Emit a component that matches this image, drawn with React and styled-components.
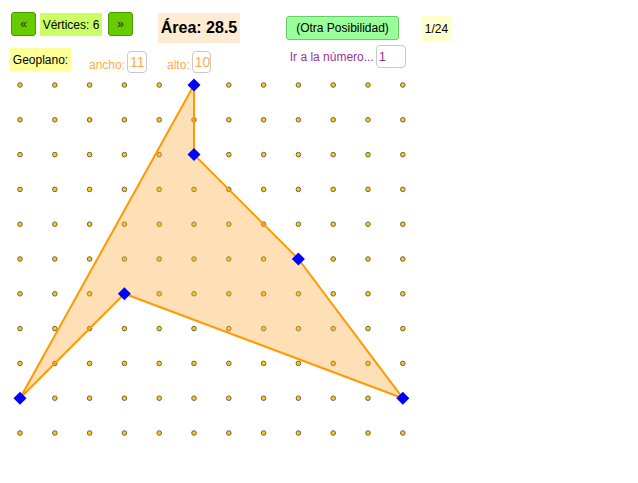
import React from 'react'
import styled, { createGlobalStyle } from 'styled-components'

const GlobalStyle = createGlobalStyle`
  body { margin: 0; background: #fff; }
  * { box-sizing: border-box; }
`

const COLS = 12
const ROWS = 11
const STEP = 34.8
const X0 = 20
const Y0 = 85

const vertices = [[5, 0], [5, 2], [8, 5], [11, 9], [3, 6], [0, 9]]
const px = ([c, r]) => [X0 + c * STEP, Y0 + r * STEP]

const Page = styled.div`
  position: relative;
  width: 638px;
  height: 483px;
  font-family: "Liberation Sans", Arial, sans-serif;
  font-size: 12px;
  color: #000;
  overflow: hidden;
`

const Board = styled.svg`
  position: absolute;
  left: 0;
  top: 0;
`

const Controls = styled.div`
  position: relative;
  padding-top: 12px;
`

const Row = styled.div`
  display: flex;
  align-items: flex-start;
  height: ${p => p.$height}px;
`

const NavButton = styled.div`
  width: 25px;
  height: 24px;
  margin-left: ${p => p.$left}px;
  background: #66cc00;
  border: 1px solid #4d9a00;
  border-radius: 3px;
  display: flex;
  align-items: center;
  justify-content: center;
  font-size: 12px;
  color: #1a3300;
`

const Tag = styled.div`
  height: 23px;
  width: ${p => p.$width}px;
  margin-left: ${p => p.$left}px;
  margin-top: ${p => p.$top || 0}px;
  background: ${p => p.$bg};
  display: flex;
  align-items: center;
  justify-content: center;
`

const AreaBox = styled.div`
  width: 82px;
  height: 30px;
  margin-left: 25px;
  margin-top: 1px;
  background: #fdebd4;
  font-weight: bold;
  font-size: 16px;
  display: flex;
  align-items: center;
  justify-content: center;
`

const OtraButton = styled.div`
  width: 113px;
  height: 24px;
  margin-left: 46px;
  margin-top: 4px;
  background: #99ff99;
  border: 1px solid #66cc66;
  border-radius: 3px;
  display: flex;
  align-items: center;
  justify-content: center;
`

const Counter = styled.div`
  width: 29px;
  height: 25px;
  margin-left: 23px;
  margin-top: 4px;
  background: #ffffcc;
  display: flex;
  align-items: center;
  justify-content: center;
`

const Field = styled.div`
  display: flex;
  align-items: ${p => p.$align};
  margin-left: ${p => p.$left}px;
  margin-top: ${p => p.$top}px;
  color: ${p => p.$color};
`

const FieldLabel = styled.span`
  line-height: 14px;
  margin-bottom: ${p => p.$bottom || 0}px;
  margin-right: 2px;
`

const FieldInput = styled.div`
  width: ${p => p.$width}px;
  height: ${p => p.$height}px;
  border: 1px solid #c8c8c8;
  border-radius: 4px;
  padding-left: 2px;
  display: flex;
  align-items: center;
  background: #fff;
  font-size: ${p => p.$size}px;
`

function Geoboard() {
  const dots = []
  for (let r = 0; r < ROWS; r++) {
    for (let c = 0; c < COLS; c++) {
      const [x, y] = px([c, r])
      dots.push(<circle key={`${c}-${r}`} cx={x} cy={y} r="2.3" fill="#ffcc00" stroke="#555" strokeWidth="0.9" />)
    }
  }
  const pts = vertices.map(px)
  return (
    <Board width="638" height="483" viewBox="0 0 638 483">
      {dots}
      <polygon
        points={pts.map(p => p.join(',')).join(' ')}
        fill="rgba(255,170,60,0.38)"
        stroke="#ff9900"
        strokeWidth="2"
        strokeLinejoin="round"
      />
      {pts.map(([x, y], i) => (
        <polygon key={i} points={`${x},${y - 6.5} ${x + 6.5},${y} ${x},${y + 6.5} ${x - 6.5},${y}`} fill="#0000ff" />
      ))}
    </Board>
  )
}

export default function App() {
  return (
    <Page>
      <GlobalStyle />
      <Geoboard />
      <Controls>
        <Row $height={33}>
          <NavButton $left={11}>«</NavButton>
          <Tag $width={62} $left={4} $top={1} $bg="#ccff66">Vértices: 6</Tag>
          <NavButton $left={6}>»</NavButton>
          <AreaBox>Área: 28.5</AreaBox>
          <OtraButton>(Otra Posibilidad)</OtraButton>
          <Counter>1/24</Counter>
        </Row>
        <Row $height={30}>
          <Tag $width={61} $left={10} $top={3} $bg="#ffff99">Geoplano:</Tag>
          <Field $align="flex-end" $left={18} $top={6} $color="#ffaa4d">
            <FieldLabel $bottom={1}>ancho:</FieldLabel>
            <FieldInput $width={20} $height={22} $size={14}>11</FieldInput>
          </Field>
          <Field $align="flex-end" $left={20} $top={6} $color="#ffaa4d">
            <FieldLabel $bottom={1}>alto:</FieldLabel>
            <FieldInput $width={19} $height={22} $size={14}>10</FieldInput>
          </Field>
          <Field $align="center" $left={79} $top={0} $color="#993399">
            <FieldLabel>Ir a la número...</FieldLabel>
            <FieldInput $width={30} $height={23} $size={13}>1</FieldInput>
          </Field>
        </Row>
      </Controls>
    </Page>
  )
}
